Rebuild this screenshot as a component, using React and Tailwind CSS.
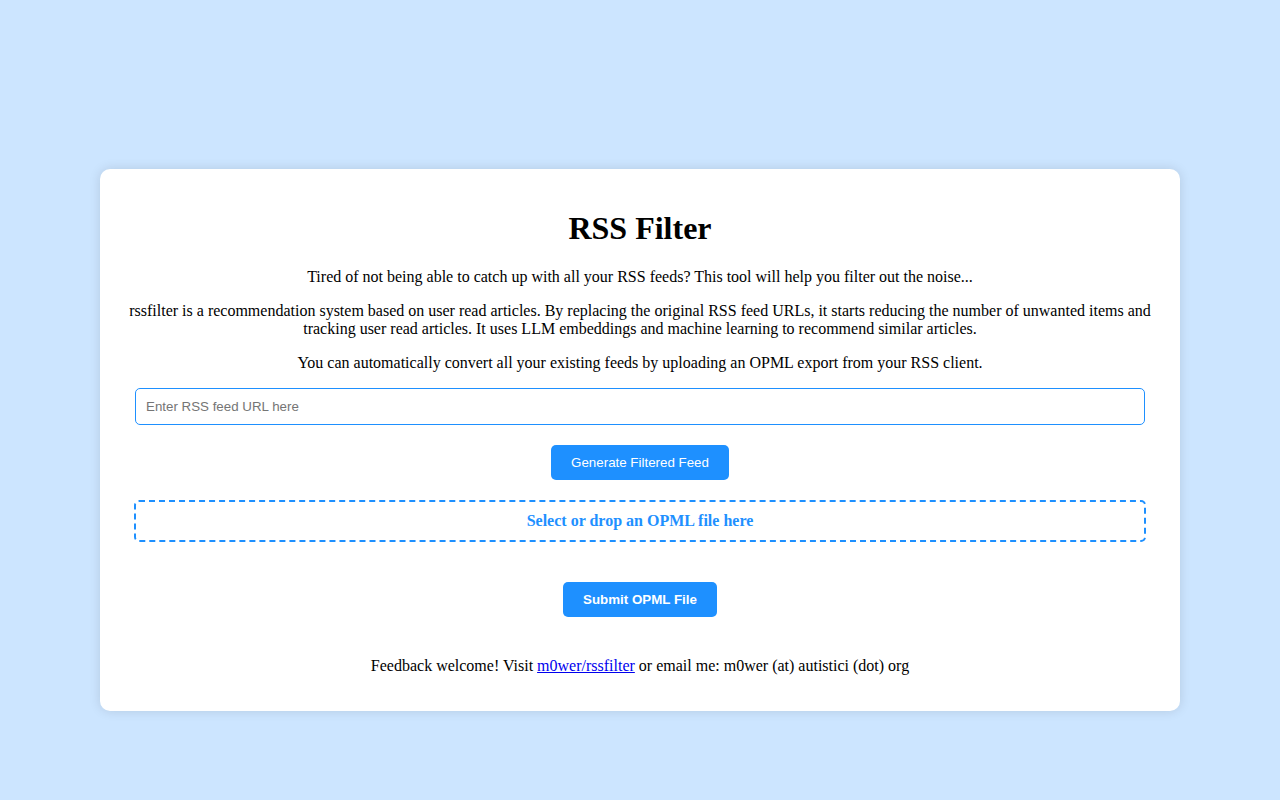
export default function App() {
  return (
    <div className="min-h-screen bg-[#cce5ff] pt-[169px] pb-[89px] font-['Liberation_Serif',serif] text-black">
      <div className="mx-[100px] rounded-[10px] bg-white p-[20px] text-center shadow-[0_0_12px_rgba(0,0,0,0.12)]">
        <h1 className="my-[21px] text-[32px] font-bold leading-[37px]">RSS Filter</h1>
        <p className="my-[16px] text-[16px] leading-[18px]">
          Tired of not being able to catch up with all your RSS feeds? This tool will help you filter out the noise...
        </p>
        <p className="my-[16px] text-[16px] leading-[18px]">
          rssfilter is a recommendation system based on user read articles. By replacing the original RSS feed URLs, it starts reducing the number of unwanted items and tracking user read articles. It uses LLM embeddings and machine learning to recommend similar articles.
        </p>
        <p className="mt-[16px] text-[16px] leading-[18px]">
          You can automatically convert all your existing feeds by uploading an OPML export from your RSS client.
        </p>

        <div className="mx-[15px] mt-[16px]">
          <input
            type="text"
            placeholder="Enter RSS feed URL here"
            className="block w-full rounded-[5px] border border-[#1e90ff] px-[10px] py-[10px] font-['Liberation_Sans',sans-serif] text-[13.33px] leading-[15px] outline-none placeholder:text-[#757575]"
          />
        </div>

        <button className="mt-[20px] rounded-[5px] bg-[#1e90ff] px-[20px] py-[10px] font-['Liberation_Sans',sans-serif] text-[13.33px] leading-[15px] text-white">
          Generate Filtered Feed
        </button>

        <div className="mx-[14px] mt-[20px] rounded-[5px] border-2 border-dashed border-[#1e90ff] py-[10px] text-[16px] font-bold leading-[18px] text-[#1e90ff]">
          Select or drop an OPML file here
        </div>

        <button className="mt-[40px] rounded-[5px] bg-[#1e90ff] px-[20px] py-[10px] font-['Liberation_Sans',sans-serif] text-[13.33px] font-bold leading-[15px] text-white">
          Submit OPML File
        </button>

        <p className="mb-[16px] mt-[40px] text-[16px] leading-[18px]">
          Feedback welcome! Visit{' '}
          <a href="#" className="text-[#0000ee] underline">m0wer/rssfilter</a>{' '}
          or email me: m0wer (at) autistici (dot) org
        </p>
      </div>
    </div>
  );
}
